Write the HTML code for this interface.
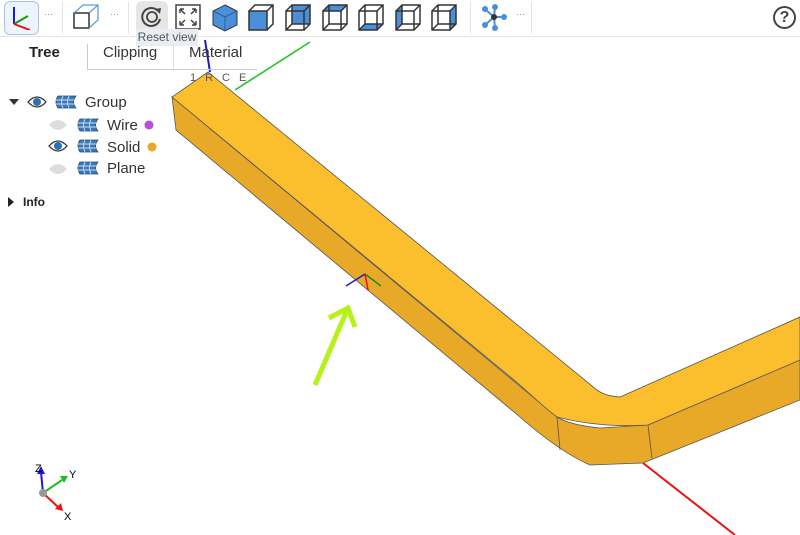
<!DOCTYPE html>
<html><head><style>
body{margin:0;width:800px;height:535px;overflow:hidden;background:#fff;font-family:"Liberation Sans",sans-serif;position:relative}
.tb{position:absolute;left:0;top:0;width:800px;height:36px;border-bottom:1px solid #e6e6e6;background:#fff}
.dots{position:absolute;top:9px;font-size:9px;color:#888}
.sep{position:absolute;top:2px;width:1px;height:32px;background:#e3e3e3}
.tabs{position:absolute;top:44px;left:0;font-size:15px;color:#333}
.row{position:absolute;font-size:15px;color:#333}
</style></head><body>
<svg width="800" height="535" style="position:absolute;left:0;top:0">
<line x1="235" y1="90" x2="310" y2="42" stroke="#1fbf1f" stroke-width="1.5"/>
<line x1="643" y1="463" x2="735" y2="535" stroke="#e11" stroke-width="2"/>
<path d="M172,97 L176,130 L520,417 Q560,452 590,465 L643,463 L800,400 L800,360 L648,425 L600,428 Q570,425 557,417 Z" fill="#e8a928" stroke="#555" stroke-width="0.8"/>
<path d="M172,97 L520,385 Q545,408 557,417 Q600,428 648,425 L800,360 L800,317 L620,397 Q605,396 597,390 L208,72 Z" fill="#fbbf2d" stroke="#555" stroke-width="0.8"/>
<line x1="557" y1="417" x2="560" y2="450" stroke="#555" stroke-width="0.8"/>
<line x1="648" y1="425" x2="652" y2="458" stroke="#555" stroke-width="0.8"/>
<line x1="205" y1="40" x2="210" y2="72" stroke="#1a1acc" stroke-width="2"/>
<line x1="365" y1="274" x2="346" y2="286" stroke="#1a1acc" stroke-width="1.5"/>
<line x1="365" y1="274" x2="381" y2="286" stroke="#1a8a1a" stroke-width="1.5"/>
<line x1="365" y1="274" x2="368" y2="290" stroke="#e11" stroke-width="1.5"/>
<g stroke="#b4f21a" stroke-width="5" fill="none">
<line x1="315" y1="385" x2="348" y2="308"/>
<polyline points="329,318 348,308 355,327"/>
</g>
<line x1="43" y1="493" x2="41" y2="472" stroke="#1a1acc" stroke-width="2"/>
<polygon points="37,474 41,466 45,474" fill="#1a1acc"/>
<line x1="43" y1="493" x2="62" y2="480" stroke="#1fbf1f" stroke-width="2"/>
<polygon points="60,476 68,476 64,483" fill="#1fbf1f"/>
<line x1="43" y1="493" x2="58" y2="507" stroke="#e11" stroke-width="2"/>
<polygon points="55,509 63,511 61,503" fill="#e11"/>
<circle cx="43" cy="493" r="4" fill="#999"/>
<text x="35" y="472" font-size="11" font-family="Liberation Sans">Z</text>
<text x="69" y="478" font-size="11" font-family="Liberation Sans">Y</text>
<text x="64" y="520" font-size="11" font-family="Liberation Sans">X</text>
</svg>

<div class="tb">
<div style="position:absolute;left:4px;top:1px;width:33px;height:32px;border:1px solid #a9c3e3;border-radius:6px;background:#eef4fb"></div>
<svg style="position:absolute;left:8px;top:4px" width="26" height="26"><line x1="6" y1="3" x2="6" y2="20" stroke="#1a1acc" stroke-width="2"/><line x1="6" y1="20" x2="20" y2="12" stroke="#1a9a1a" stroke-width="2"/><line x1="6" y1="20" x2="22" y2="26" stroke="#e11" stroke-width="2"/></svg>
<span class="dots" style="left:44px">···</span>
<div class="sep" style="left:62px"></div>
<svg style="position:absolute;left:72px;top:3px" width="28" height="28"><rect x="2" y="10" width="15" height="15" fill="none" stroke="#333" stroke-width="1.5"/><path d="M2,10 L11,2 L26,2 L26,17 L17,25 M17,10 L26,2" fill="none" stroke="#5aa0dc" stroke-width="1.3"/></svg>
<span class="dots" style="left:110px">···</span>
<div class="sep" style="left:128px"></div>
<div style="position:absolute;left:136px;top:1px;width:32px;height:32px;border-radius:6px;background:#e6e6e6"></div>
<svg style="position:absolute;left:139px;top:4px" width="26" height="26"><path d="M19,7 A9,9 0 1 0 21,15" fill="none" stroke="#444" stroke-width="2"/><circle cx="13" cy="13" r="5" fill="none" stroke="#444" stroke-width="1.8"/><polygon points="16,5 22,4 21,10" fill="#444"/></svg>
<svg style="position:absolute;left:175px;top:4px" width="26" height="26"><rect x="1" y="1" width="24" height="24" fill="none" stroke="#444" stroke-width="1.5"/><path d="M5,5 L10,10 M5,5 h4 M5,5 v4 M21,5 L16,10 M21,5 h-4 M21,5 v4 M5,21 L10,16 M5,21 h4 M5,21 v-4 M21,21 L16,16 M21,21 h-4 M21,21 v-4" stroke="#444" stroke-width="1.5" fill="none"/></svg>
<svg style="position:absolute;left:212px;top:4px" width="580" height="28">
<g><path d="M13,1 L25,7 L25,21 L13,27 L1,21 L1,7 Z" fill="#4a90d8" stroke="#333" stroke-width="1"/><path d="M1,7 L13,13 L25,7 M13,13 V27" fill="none" stroke="#2a5f99" stroke-width="1"/></g>
<g transform="translate(36,0)"><rect x="1" y="7" width="18" height="19" fill="#4a90d8" stroke="#333" stroke-width="1.5"/><path d="M1,7 L7,1 L25,1 L25,20 L19,26 M19,7 L25,1" fill="none" stroke="#333" stroke-width="1.5"/></g>
<g transform="translate(73,0)"><rect x="7" y="1" width="18" height="19" fill="#4a90d8"/><rect x="1" y="7" width="18" height="19" fill="none" stroke="#333" stroke-width="1.5"/><path d="M1,7 L7,1 L25,1 L25,20 L19,26 M19,7 L25,1 M7,1 V20 H25 M1,26 L7,20" fill="none" stroke="#333" stroke-width="1.5"/></g>
<g transform="translate(110,0)"><path d="M1,7 L7,1 L25,1 L19,7 Z" fill="#4a90d8"/><rect x="1" y="7" width="18" height="19" fill="none" stroke="#333" stroke-width="1.5"/><path d="M1,7 L7,1 L25,1 L25,20 L19,26 M19,7 L25,1 M7,1 V20 H25 M1,26 L7,20" fill="none" stroke="#333" stroke-width="1.5"/></g>
<g transform="translate(146,0)"><path d="M1,26 L7,20 L25,20 L19,26 Z" fill="#4a90d8"/><rect x="1" y="7" width="18" height="19" fill="none" stroke="#333" stroke-width="1.5"/><path d="M1,7 L7,1 L25,1 L25,20 L19,26 M19,7 L25,1 M7,1 V20 H25 M1,26 L7,20" fill="none" stroke="#333" stroke-width="1.5"/></g>
<g transform="translate(183,0)"><path d="M1,7 L7,1 L7,20 L1,26 Z" fill="#4a90d8"/><rect x="1" y="7" width="18" height="19" fill="none" stroke="#333" stroke-width="1.5"/><path d="M1,7 L7,1 L25,1 L25,20 L19,26 M19,7 L25,1 M7,1 V20 H25 M1,26 L7,20" fill="none" stroke="#333" stroke-width="1.5"/></g>
<g transform="translate(219,0)"><path d="M19,7 L25,1 L25,20 L19,26 Z" fill="#4a90d8"/><rect x="1" y="7" width="18" height="19" fill="none" stroke="#333" stroke-width="1.5"/><path d="M1,7 L7,1 L25,1 L25,20 L19,26 M19,7 L25,1 M7,1 V20 H25 M1,26 L7,20" fill="none" stroke="#333" stroke-width="1.5"/></g>
</svg>
<div class="sep" style="left:470px"></div>
<svg style="position:absolute;left:480px;top:4px" width="28" height="28"><g stroke="#4a90d8" stroke-width="2"><line x1="14" y1="13" x2="5" y2="5"/><line x1="14" y1="13" x2="5" y2="21"/><line x1="14" y1="13" x2="15" y2="3"/><line x1="14" y1="13" x2="15" y2="24"/><line x1="14" y1="13" x2="24" y2="13"/></g><g fill="#4a90d8"><circle cx="5" cy="5" r="3"/><circle cx="5" cy="21" r="3"/><circle cx="15" cy="3" r="3"/><circle cx="15" cy="24" r="3"/><circle cx="24" cy="13" r="3"/></g><circle cx="14" cy="13" r="3" fill="#333"/></svg>
<span class="dots" style="left:516px">···</span>
<div class="sep" style="left:531px"></div>
<div style="position:absolute;left:773px;top:6px;width:19px;height:19px;border:2px solid #444;border-radius:50%;text-align:center;font-weight:bold;font-size:16px;line-height:19px;color:#444">?</div>
</div>

<div style="position:absolute;left:136px;top:29px;width:62px;height:17px;background:#e9eef5;font-size:12px;color:#555;line-height:17px;text-align:center">Reset view</div>

<div style="position:absolute;left:87px;top:44px;width:1px;height:26px;background:#ccc"></div>
<div style="position:absolute;left:173px;top:44px;width:1px;height:26px;background:#ddd"></div>
<div style="position:absolute;left:87px;top:69px;width:170px;height:1px;background:#ccc"></div>
<div class="tabs" style="left:29px;font-weight:bold;color:#222">Tree</div>
<div class="tabs" style="left:103px">Clipping</div>
<div class="tabs" style="left:189px">Material</div>
<div style="position:absolute;left:190px;top:72px;font-size:11px;color:#555;letter-spacing:9px">1RCE</div>

<svg style="position:absolute;left:0;top:90px" width="170" height="95">
<defs><g id="ic"><path d="M4,0 H22 Q17,6 22,12 H4 Q0,6 4,0 Z" fill="#3a78b8" stroke="#244d7a" stroke-width="0.8"/><path d="M2,4 H20 M2,8 H20 M9,0 Q6,6 9,12 M15,0 Q12,6 15,12" stroke="#cfe0f2" stroke-width="0.9" fill="none"/></g></defs>
<polygon points="9,9 19,9 14,15" fill="#333"/>
<path d="M28,12 Q37,2 46,12 Q37,22 28,12 Z" fill="none" stroke="#333" stroke-width="1.3"/><circle cx="37" cy="12" r="4" fill="#2f6fb5"/>
<g fill="#ddd"><path d="M49,35 Q58,25 67,35 Q58,45 49,35 Z"/><path d="M49,79 Q58,69 67,79 Q58,89 49,79 Z"/></g>
<path d="M49,56 Q58,46 67,56 Q58,66 49,56 Z" fill="none" stroke="#333" stroke-width="1.3"/><circle cx="58" cy="56" r="4" fill="#2f6fb5"/>
<use href="#ic" x="54" y="6"/>
<use href="#ic" x="76" y="29"/>
<use href="#ic" x="76" y="50"/>
<use href="#ic" x="76" y="72"/>
<circle cx="149" cy="35" r="4.5" fill="#b84fd6"/><circle cx="152" cy="57" r="4.5" fill="#e9a92a"/>
</svg>
<div class="row" style="left:85px;top:94px">Group</div>
<div class="row" style="left:107px;top:117px">Wire</div>
<div class="row" style="left:107px;top:139px">Solid</div>
<div class="row" style="left:107px;top:160px">Plane</div>
<svg style="position:absolute;left:6px;top:196px" width="10" height="12"><polygon points="2,1 8,6 2,11" fill="#222"/></svg>
<div class="row" style="left:23px;top:195px;font-size:12px;font-weight:bold;color:#222">Info</div>
</body></html>
